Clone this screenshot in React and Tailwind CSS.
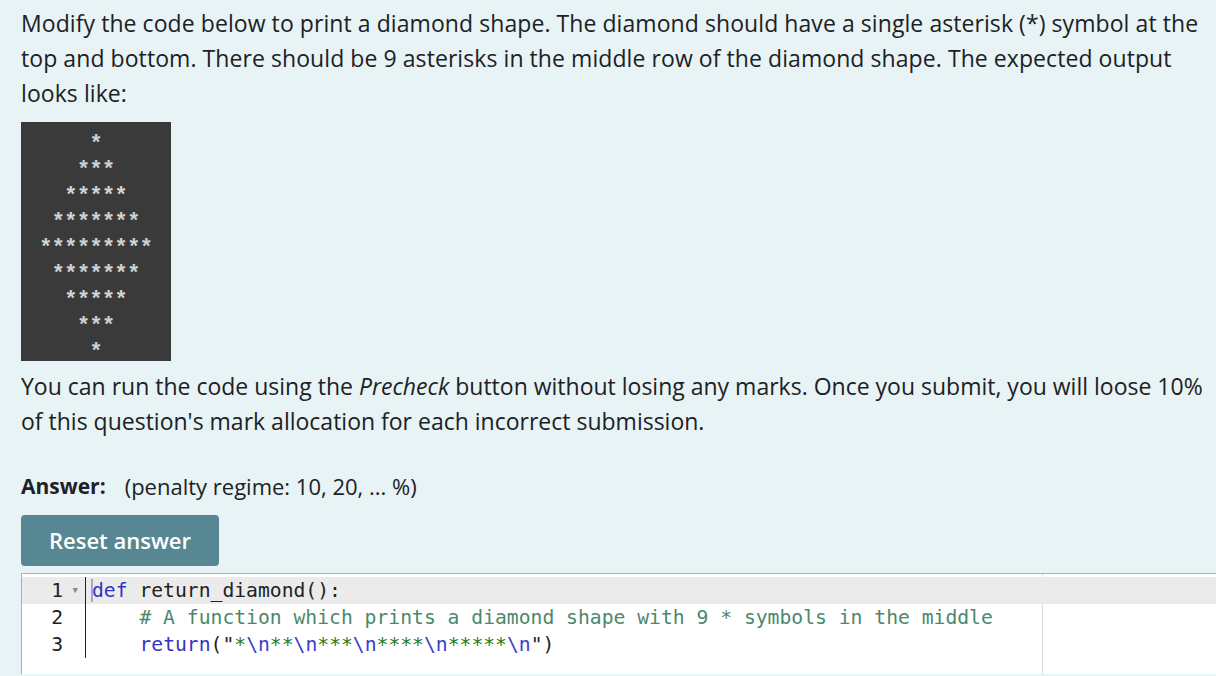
import React from "react";

const rows = [1, 3, 5, 7, 9, 7, 5, 3, 1];

function Diamond() {
  //the expected output picture
  return (
    <div className="mt-[11px] flex h-[239px] w-[150px] flex-col items-center bg-[#3a3a3a] pt-[7px]">
      {rows.map((n, i) => (
        <div
          key={i}
          className="h-[26px] pl-[4px] font-['Liberation_Sans',sans-serif] text-[22px] font-bold leading-[26px] tracking-[4px] text-[#d0d0d0]"
        >
          {"*".repeat(n)}
        </div>
      ))}
    </div>
  );
}

function Gutter({ n, active, fold }) {
  return (
    <div
      className={
        "relative flex h-[27px] w-[64px] items-center justify-end border-r border-[#222] pr-[22px] " +
        (active ? "bg-[#ebebeb]" : "")
      }
    >
      <span>{n}</span>
      {fold ? (
        <span className="absolute right-[7px] top-[9px] text-[9px] leading-none text-[#888]">▼</span>
      ) : null}
    </div>
  );
}

function Editor() {
  const kw = "text-[#3434c0]";
  const str = "text-[#2a7a1c]";
  const esc = "text-[#4040c8]";
  return (
    <div className="ml-[21px] mt-[7px] flex h-[101px] border-l border-t border-[#a9b2b5] bg-white font-['DejaVu_Sans_Mono',monospace] text-[19.7px] text-[#222]">
      <div className="flex flex-col pt-[3px]">
        <Gutter n={1} active fold />
        <Gutter n={2} />
        <Gutter n={3} />
      </div>
      <div className="relative flex-1 pt-[3px]">
        <div className="absolute bottom-0 left-[956px] top-0 w-px bg-[#dcdcdc]" />
        <div className="relative h-[27px] whitespace-pre bg-[#ebebeb] pl-[6px] leading-[27px]">
          <span className="absolute left-[5px] top-[2px] h-[23px] w-[2px] bg-[#a8a8c0]" />
          <span className={kw}>def</span> return_diamond():
        </div>
        <div className="h-[27px] whitespace-pre pl-[6px] leading-[27px] text-[#4c886b]">
          {"    # A function which prints a diamond shape with 9 * symbols in the middle"}
        </div>
        <div className="h-[27px] whitespace-pre pl-[6px] leading-[27px]">
          {"    "}
          <span className={kw}>return</span>("
          <span className={str}>*</span>
          <span className={esc}>\n</span>
          <span className={str}>**</span>
          <span className={esc}>\n</span>
          <span className={str}>***</span>
          <span className={esc}>\n</span>
          <span className={str}>****</span>
          <span className={esc}>\n</span>
          <span className={str}>*****</span>
          <span className={esc}>\n</span>")
        </div>
      </div>
    </div>
  );
}

export default function App() {
  return (
    <div className="h-[676px] overflow-hidden bg-[#e7f3f5] font-['Open_Sans',sans-serif] text-[#1d2125]">
      <div className="px-[21px] pt-[6px]">
        <p className="whitespace-nowrap text-[23px] leading-[35px] tracking-[0.07px]">
          Modify the code below to print a diamond shape. The diamond should have a single asterisk (*) symbol at the
          <br />
          top and bottom. There should be 9 asterisks in the middle row of the diamond shape. The expected output
          <br />
          looks like:
        </p>
        <Diamond />
        <p className="mt-[8px] whitespace-nowrap text-[23px] leading-[35px]">
          You can run the code using the <em>Precheck</em> button without losing any marks. Once you submit, you will loose 10%
          <br />
          of this question's mark allocation for each incorrect submission.
        </p>
        <div className="mt-[30px] flex h-[35px] items-center gap-[19px]">
          <span className="text-[21px] font-bold">Answer:</span>
          <span className="text-[22px]">(penalty regime: 10, 20, ... %)</span>
        </div>
        <button className="mt-[11px] h-[51px] w-[198px] rounded-[4px] bg-[#568792] text-[22px] font-semibold text-white">
          Reset answer
        </button>
      </div>
      <Editor />
    </div>
  );
}
